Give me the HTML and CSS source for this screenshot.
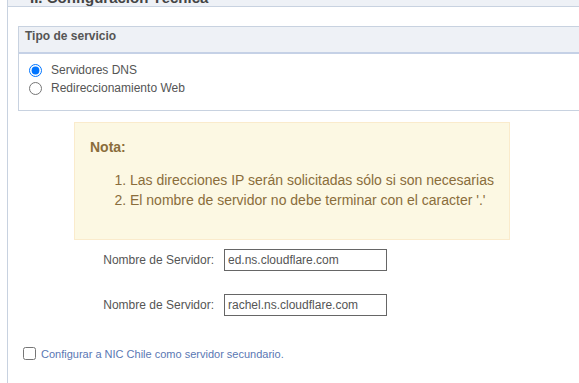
FILE: index.html
```html
<!DOCTYPE html>
<html>
<head>
  <title>Configuración Técnica</title>
  <link rel="stylesheet" href="styles.css">
</head>
<body>
  <div class="panel">
    <div class="panel-head">II. Configuración Técnica</div>
    <div class="panel-body">
      <!-- Tipo de servicio -->
      <div class="service">
        <div class="service-head">Tipo de servicio</div>
        <div class="service-body">
          <label class="radio-row"><input type="radio" name="tipo" checked> Servidores DNS</label>
          <label class="radio-row"><input type="radio" name="tipo"> Redireccionamiento Web</label>
        </div>
      </div>

      <!-- Nota -->
      <div class="note">
        <div class="note-title">Nota:</div>
        <ol class="note-list">
          <li>Las direcciones IP serán solicitadas sólo si son necesarias</li>
          <li>El nombre de servidor no debe terminar con el caracter '.'</li>
        </ol>
      </div>

      <!-- Servidores -->
      <div class="servers">
        <div class="server-row">
          <label class="server-label">Nombre de Servidor:</label>
          <input class="server-input" type="text" value="ed.ns.cloudflare.com">
        </div>
        <div class="server-row">
          <label class="server-label">Nombre de Servidor:</label>
          <input class="server-input" type="text" value="rachel.ns.cloudflare.com">
        </div>
      </div>

      <label class="secondary"><input type="checkbox"> Configurar a NIC Chile como servidor secundario.</label>
    </div>
  </div>
</body>
</html>
```

FILE: styles.css
```css
html, body {
  margin: 0;
  padding: 0;
}

body {
  background-color: #fff;
  font-family: 'Liberation Sans', Arial, sans-serif;
  color: #555;
  overflow: hidden;
}

/* Outer panel */
.panel {
  margin: -16px -40px 0 7px;
  border-left: 1px solid #c8d2e0;
  min-height: 420px;
}

.panel-head {
  background-color: #eef1f6;
  border-bottom: 1px solid #c8d2e0;
  padding: 6px 22px 0;
  line-height: 16px;
  height: 16px;
  font-size: 15px;
  font-weight: bold;
  color: #444;
  overflow: hidden;
}

.panel-body {
  padding: 19px 0 0 10px;
}

/* Tipo de servicio */
.service {
  border: 1px solid #c8d2e0;
  border-right: none;
}

.service-head {
  background-color: #eef1f6;
  border-bottom: 2px solid #c5d1e6;
  padding: 1px 6px 8px;
  line-height: 16px;
  font-size: 12px;
  font-weight: bold;
  color: #555;
}

.service-body {
  padding: 7px 10px 13px;
}

.radio-row {
  display: flex;
  align-items: center;
  height: 18px;
  font-size: 12px;
  color: #555;
}

.radio-row input {
  margin: 0 9px 0 0;
  width: 13px;
  height: 13px;
}

/* Nota */
.note {
  margin: 11px 0 0 56px;
  background-color: #fcf8e3;
  border: 1px solid #faebcc;
  color: #8a6d3b;
  font-size: 14px;
  line-height: 20px;
  padding: 14px 0 29px 15px;
  width: 419px;
}

.note-title {
  font-weight: bold;
}

.note-list {
  margin: 13px 0 0;
  padding-left: 40px;
}

/* Servidores */
.servers {
  display: flex;
  flex-direction: column;
  gap: 23px;
  margin-top: 9px;
}

.server-row {
  display: flex;
  align-items: center;
}

.server-label {
  width: 196px;
  text-align: right;
  font-size: 12px;
  color: #555;
  margin-right: 10px;
}

.server-input {
  box-sizing: border-box;
  width: 163px;
  height: 22px;
  margin: 0;
  padding: 1px 3px;
  border: 1px solid #666;
  font-family: inherit;
  font-size: 12px;
  color: #555;
  outline: none;
}

/* Servidor secundario */
.secondary {
  display: flex;
  align-items: center;
  margin-top: 31px;
  padding-left: 5px;
  font-size: 11px;
  color: #5a77b3;
}

.secondary input {
  margin: 0 5px 0 0;
  width: 13px;
  height: 13px;
}
```
